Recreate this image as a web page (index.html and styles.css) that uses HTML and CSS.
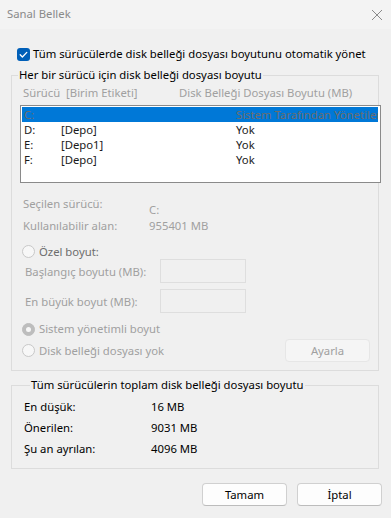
FILE: index.html
```html
<!DOCTYPE html>
<html lang="tr">
<head>
<meta charset="utf-8">
<title>Sanal Bellek</title>
<link rel="stylesheet" href="styles.css">
</head>
<body>
<div class="window">
  <div class="titlebar">
    <span class="title">Sanal Bellek</span>
    <svg class="close" width="12" height="12" viewBox="0 0 12 12"><path d="M1 1 L11 11 M11 1 L1 11" stroke="#8a8a8a" stroke-width="1" fill="none"/></svg>
  </div>
  <div class="content">
    <label class="auto-row">
      <span class="checkbox"><svg width="13" height="13" viewBox="0 0 13 13"><path d="M3.2 6.8 L5.4 9 L9.8 4.4" stroke="#fff" stroke-width="1.3" fill="none" stroke-linecap="round" stroke-linejoin="round"/></svg></span>
      <span class="text">Tüm sürücülerde disk belleği dosyası boyutunu otomatik yönet</span>
    </label>

    <fieldset class="group group-drives">
      <legend>Her bir sürücü için disk belleği dosyası boyutu</legend>
      <div class="col-head">
        <span class="c-drive">Sürücü&nbsp; [Birim Etiketi]</span>
        <span class="c-size">Disk Belleği Dosyası Boyutu (MB)</span>
      </div>
      <div class="listbox">
        <div class="row selected"><span class="c1">C:</span><span class="c2"></span><span class="c3">Sistem Tarafından Yönetilen</span></div>
        <div class="row"><span class="c1">D:</span><span class="c2">[Depo]</span><span class="c3">Yok</span></div>
        <div class="row"><span class="c1">E:</span><span class="c2">[Depo1]</span><span class="c3">Yok</span></div>
        <div class="row"><span class="c1">F:</span><span class="c2">[Depo]</span><span class="c3">Yok</span></div>
      </div>
      <div class="info">
        <div class="info-row first"><span class="info-label">Seçilen sürücü:</span><span class="info-val drop">C:</span></div>
        <div class="info-row"><span class="info-label">Kullanılabilir alan:</span><span class="info-val">955401 MB</span></div>
      </div>
      <div class="radio-row custom"><span class="radio"></span><span class="r-text dark">Özel boyut:</span></div>
      <div class="field-row first"><span class="field-label">Başlangıç boyutu (MB):</span><span class="input"></span></div>
      <div class="field-row"><span class="field-label">En büyük boyut (MB):</span><span class="input"></span></div>
      <div class="radio-row system"><span class="radio checked"></span><span class="r-text">Sistem yönetimli boyut</span></div>
      <div class="radio-row none"><span class="radio"></span><span class="r-text">Disk belleği dosyası yok</span><span class="btn disabled">Ayarla</span></div>
    </fieldset>

    <fieldset class="group group-total">
      <legend>Tüm sürücülerin toplam disk belleği dosyası boyutu</legend>
      <div class="total-row"><span class="t-label">En düşük:</span><span>16 MB</span></div>
      <div class="total-row"><span class="t-label">Önerilen:</span><span>9031 MB</span></div>
      <div class="total-row"><span class="t-label">Şu an ayrılan:</span><span>4096 MB</span></div>
    </fieldset>

    <div class="buttons">
      <span class="btn">Tamam</span>
      <span class="btn">İptal</span>
    </div>
  </div>
</div>
</body>
</html>
```
FILE: styles.css
```css
* { box-sizing: border-box; }
html, body { margin: 0; padding: 0; }
body {
  width: 391px;
  height: 518px;
  background: #f0f0f0;
  font-family: "Noto Sans", "Open Sans", sans-serif;
  font-size: 11.3px;
  color: #000;
  overflow: hidden;
}
.window { width: 391px; height: 518px; }

.titlebar {
  height: 29px;
  background: #f3f3f3;
  display: flex;
  align-items: center;
  justify-content: space-between;
  padding: 0 8px 0 7px;
}
.title { color: #8a8a8a; font-size: 11.3px; line-height: 16px; padding-bottom: 1px; }
.close { display: block; margin-top: 1px; }

.content { padding: 0 9px 0 11px; }

.auto-row {
  display: flex;
  align-items: center;
  height: 16px;
  margin-top: 17px;
  padding-left: 6px;
  line-height: 16px;
}
.checkbox {
  width: 13px; height: 13px;
  border-radius: 3px;
  background: #005fb8;
  display: flex;
  margin-right: 3px;
}
.checkbox svg { display: block; }

.group {
  margin: 0;
  padding: 0;
  border: 1px solid #dcdcdc;
  min-width: 0;
  width: 368px;
}
.group legend {
  margin-left: 6px;
  padding: 0 1px;
  line-height: 16px;
  color: #000;
}
.group-drives { margin-top: 5px; padding-bottom: 8px; }

.col-head {
  display: flex;
  line-height: 16px;
  margin-top: 2px;
  padding-left: 11px;
  color: #a0a0a0;
}
.c-drive { width: 156px; }

.listbox {
  margin: 4px -3px 0 8px;
  height: 78px;
  border: 1px solid #8a8a8a;
  background: #fff;
  padding: 1px 2px 1px 1px;
  overflow: hidden;
}
.row {
  display: flex;
  height: 15px;
  line-height: 15px;
  padding-left: 2px;
  color: #1a1a1a;
  white-space: nowrap;
  overflow: hidden;
}
.row.selected { background: #0078d7; color: #6d6d6d; }
.row .c1 { width: 37px; flex: none; }
.row .c2 { width: 175px; flex: none; }
.row .c3 { flex: none; }

.info { margin-top: 13px; padding-left: 11px; color: #a0a0a0; }
.info-row { display: flex; line-height: 16px; }
.info-label { width: 126px; flex: none; }
.info-val.drop { padding-top: 6px; }

.radio-row {
  display: flex;
  align-items: center;
  padding-left: 10px;
  line-height: 16px;
  color: #a0a0a0;
}
.radio-row.custom { margin-top: 10px; height: 15px; }
.radio-row.system { margin-top: 8px; height: 16px; }
.radio-row.none { margin-top: 2px; height: 23px; }
.radio {
  width: 13px; height: 13px;
  border-radius: 50%;
  border: 1px solid #c8c8c8;
  background: #f7f7f7;
  margin-right: 4px;
  flex: none;
  display: flex;
  align-items: center;
  justify-content: center;
}
.radio.checked { background: #bdbdbd; border-color: #bdbdbd; }
.radio.checked::after {
  content: "";
  width: 5px; height: 5px;
  border-radius: 50%;
  background: #f7f7f7;
}
.r-text.dark { color: #6d6d6d; }

.field-row {
  display: flex;
  align-items: center;
  height: 24px;
  margin-top: 6px;
  padding-left: 13px;
  color: #a0a0a0;
}
.field-row.first { margin-top: 0; }
.field-label { width: 135px; flex: none; }
.input {
  width: 86px;
  height: 24px;
  border: 1px solid #dedede;
  background: #f0f0f0;
}

.btn {
  display: flex;
  align-items: center;
  justify-content: center;
  width: 85px;
  height: 23px;
  border: 1px solid #d0d0d0;
  border-bottom-color: #bcbcbc;
  border-radius: 4px;
  background: #fdfdfd;
  color: #000;
  line-height: 16px;
}
.btn.disabled {
  margin-left: auto;
  margin-right: 8px;
  background: #f5f5f5;
  border-color: #e6e6e6;
  color: #a0a0a0;
}

.group-total { margin-top: 6px; padding: 6px 0 11px 12px; }
.total-row { display: flex; line-height: 16px; margin-bottom: 5px; }
.total-row:last-child { margin-bottom: 0; }
.t-label { width: 127px; flex: none; }

.buttons {
  display: flex;
  justify-content: flex-end;
  gap: 10px;
  margin-top: 14px;
}
```
